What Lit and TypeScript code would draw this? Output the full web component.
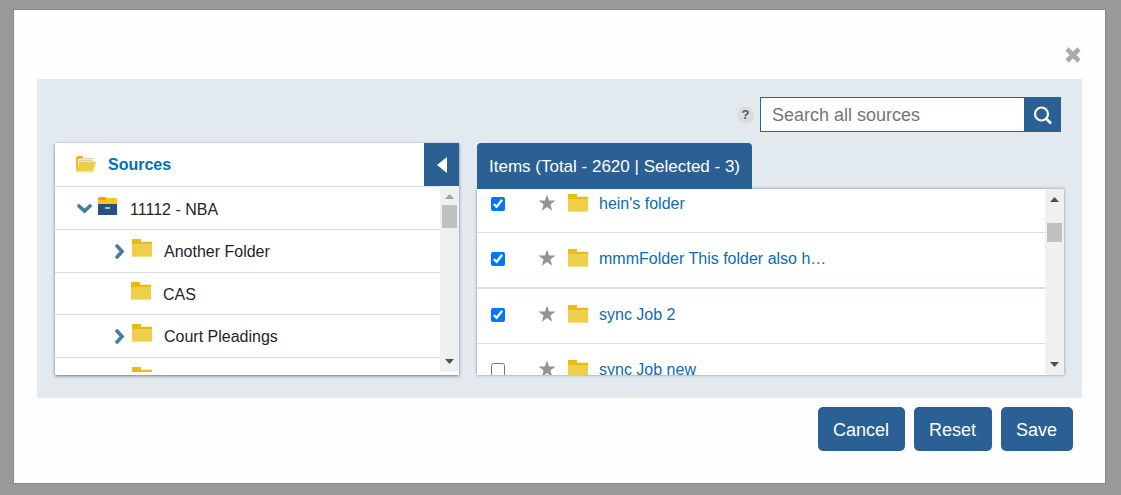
import { LitElement, html, css, svg, nothing } from "lit";
import { customElement, property } from "lit/decorators.js";

interface TreeRow {
  label: string;
  kind?: "root" | "leaf";
  toggle?: "open" | "closed";
}

interface Item {
  id: string;
  label: string;
  checked: boolean;
}

const TREE: TreeRow[] = [
  { label: "11112 - NBA", kind: "root", toggle: "open" },
  { label: "Another Folder", toggle: "closed" },
  { label: "CAS", kind: "leaf" },
  { label: "Court Pleadings", toggle: "closed" },
  { label: "", toggle: "closed" },
];

const ITEMS: Item[] = [
  { id: "hein", label: "hein's folder", checked: true },
  { id: "mmm", label: "mmmFolder This folder also h…", checked: true },
  { id: "sync2", label: "sync Job 2", checked: true },
  { id: "syncnew", label: "sync Job new", checked: false },
];

const folderIcon = html`<svg class="folder" width="20" height="18" viewBox="0 0 20 18" aria-hidden="true">
  <path d="M9 2h11v3H9z" fill="#f7edc4" />
  <path d="M0 0h9v3h11v3H0z" fill="#ebba16" />
  <path d="M0 5h20v12H0z" fill="#efce4a" />
  <path d="M0 17h20v1H0z" fill="#f4e08c" />
</svg>`;

const openFolderIcon = html`<svg width="20" height="17" viewBox="0 0 20 17" aria-hidden="true">
  <path d="M0 1h1V0h6v2h10v6H0z" fill="#e9b91b" />
  <path d="M2 3h15v5H2z" fill="#f3ead0" />
  <path d="M3 4.500h13M4 2.500h13" stroke="#d9cfb2" stroke-width="1" />
  <path d="M0 3h2v11H0z" fill="#e9bd28" />
  <path d="M3.500 6H20l-3 9.500H0z" fill="#efce4a" />
  <path d="M3.500 5.500H20M0 16h17" stroke="#f6e7a8" />
</svg>`;

const cabinetIcon = html`<svg class="folder" width="19" height="18" viewBox="0 0 19 18" aria-hidden="true">
  <path d="M0 1h1V0h6l2 1v3H0z" fill="#f99d0c" />
  <path d="M0 3h7l2-2h10v6H0z" fill="#ffc423" />
  <path d="M0 7h19v11H0z" fill="#23527f" />
  <path d="M7 10h5v2H7z" fill="#a9bccd" />
</svg>`;

const chevronDown = html`<svg width="15" height="10" viewBox="0 0 15 10" aria-hidden="true">
  <path d="M2 2l5.500 5L13 2" fill="none" stroke="#437f9b" stroke-width="3.600" stroke-linecap="round" />
</svg>`;

const chevronRight = html`<svg width="10" height="15" viewBox="0 0 10 15" aria-hidden="true">
  <path d="M2 2l5 5.500L2 13" fill="none" stroke="#437f9b" stroke-width="3.600" stroke-linecap="round" />
</svg>`;

const starIcon = html`<svg width="18" height="18" viewBox="0 0 18 18" aria-hidden="true">
  <path d="M9 .5l2.100 5.900 6.400.1-5.100 3.900 1.800 6.400L9 13.100l-5.200 3.700 1.800-6.400L.5 6.500l6.400-.1z" fill="#949494" />
</svg>`;

@customElement("scroll-rail")
class ScrollRail extends LitElement {
  @property({ type: Boolean, reflect: true }) top = false;

  static styles = css`
    :host {
      display: flex;
      flex-direction: column;
      align-items: center;
      justify-content: space-between;
      box-sizing: border-box;
      flex: none;
      width: 19px;
      padding: 8px 0;
      background: #f0f0f0;
    }
    .upper {
      display: flex;
      flex-direction: column;
      align-items: center;
      gap: 21px;
    }
    .thumb {
      width: 15px;
      height: 19px;
      background: #c1c1c1;
    }
    :host([top]) .upper {
      gap: 6px;
    }
    :host([top]) .thumb {
      height: 23px;
    }
    svg {
      display: block;
    }
  `;

  render() {
    return html`
      <div class="upper">
        <svg width="9" height="5" viewBox="0 0 9 5">
          ${svg`<path d="M4.500 0L9 5H0z" fill=${this.top ? "#a3a3a3" : "#505050"} />`}
        </svg>
        <div class="thumb"></div>
      </div>
      <svg width="9" height="5" viewBox="0 0 9 5"><path d="M0 0h9L4.500 5z" fill="#505050" /></svg>
    `;
  }
}

@customElement("app-root")
class AppRoot extends LitElement {
  static styles = css`
    :host {
      display: block;
      box-sizing: border-box;
      min-height: 100vh;
      padding: 9px 15px 11px 13px;
      background: #999;
      font-family: "Liberation Sans", Arial, sans-serif;
      font-size: 16px;
      line-height: 20px;
      color: #212529;
    }
    * {
      box-sizing: border-box;
    }
    button,
    input {
      font: inherit;
      margin: 0;
    }
    button {
      display: flex;
      align-items: center;
      justify-content: center;
      padding: 0;
      border: 0;
      background: none;
      color: inherit;
      cursor: pointer;
    }
    ul {
      margin: 0;
      padding: 0;
      list-style: none;
    }
    svg {
      display: block;
      flex: none;
    }
    .dialog {
      padding: 0 23px 32px;
      border: 1px solid #888;
      background: #fefefe;
    }
    .top {
      display: flex;
      justify-content: flex-end;
      align-items: flex-end;
      height: 69px;
      padding-bottom: 15px;
    }
    .workspace {
      padding: 18px 18px 23px;
      background: #e2eaf0;
    }
    .search {
      display: flex;
      justify-content: flex-end;
      align-items: center;
      margin: 0 3px 11px 0;
    }
    .help {
      width: 17px;
      height: 18px;
      margin-right: 6px;
      border-radius: 50%;
      background: #dcdcdc;
      color: #555;
      font-size: 13px;
      font-weight: bold;
      line-height: 18px;
    }
    .query {
      width: 264px;
      height: 35px;
      padding: 1px 11px 0;
      border: 1px solid #2a6496;
      border-right: 0;
      border-radius: 0;
      background: #fff;
      font-size: 18px;
      outline: 0;
    }
    .query::placeholder {
      color: #757575;
      opacity: 1;
    }
    .go {
      width: 37px;
      height: 35px;
      background: #2a6093;
    }
    .panels {
      display: grid;
      grid-template-columns: 404fr 587fr;
      gap: 18px;
    }
    .sources {
      min-width: 0;
      padding-bottom: 3px;
      background: #fff;
      box-shadow: 0 1px 3px rgba(0, 0, 0, 0.5);
    }
    .heading {
      display: flex;
      align-items: center;
      height: 43px;
      padding-left: 21px;
    }
    .heading a {
      flex: 1;
      margin-left: 12px;
      color: #0270b8;
      font-weight: bold;
      text-decoration: none;
    }
    .collapse {
      width: 35px;
      height: 43px;
      background: #2a6093;
    }
    .scroller {
      display: flex;
      height: 186px;
      overflow: hidden;
    }
    .tree {
      flex: 1;
      min-width: 0;
      border-top: 1px solid #dadcde;
    }
    .node {
      display: flex;
      align-items: center;
      height: 43px;
      padding: 2px 12px 0 60px;
      border-bottom: 1px solid #dadcde;
    }
    .node.root {
      padding: 3px 12px 0 22px;
    }
    .node.leaf {
      height: 42px;
      padding-left: 59px;
    }
    .twist {
      display: flex;
      width: 17px;
      padding-bottom: 2px;
    }
    .root .twist {
      width: 21px;
    }
    .folder {
      margin-bottom: 8px;
    }
    .name {
      margin-left: 12px;
    }
    .root .name {
      margin-left: 13px;
    }
    .tab {
      display: inline-flex;
      align-items: center;
      height: 46px;
      padding: 1px 12px 0;
      border-radius: 4px 4px 0 0;
      background: #2a6093;
      color: #fff;
      font-size: 17px;
      white-space: nowrap;
    }
    .items {
      min-width: 0;
    }
    .sheet {
      background: #fff;
      box-shadow: 0 0 3px rgba(0, 0, 0, 0.4);
    }
    .list {
      flex: 1;
      min-width: 0;
      margin-top: -11px;
    }
    .item {
      display: flex;
      align-items: center;
      height: 55px;
      padding: 0 14px 2px;
      border-bottom: 1px solid #dadfe4;
    }
    .item:nth-child(2) {
      height: 56px;
      border-bottom-width: 2px;
    }
    .item input {
      width: 14px;
      height: 14px;
      margin-right: 33px;
    }
    .item .folder {
      margin: 0 11px 2px 12px;
    }
    .item label {
      color: #0b6cb0;
      white-space: nowrap;
    }
    .star {
      margin-bottom: 3px;
    }
    .footer {
      display: flex;
      justify-content: flex-end;
      gap: 9px;
      padding: 9px 9px 0;
    }
    .action {
      height: 44px;
      padding: 2px 16px 0 15px;
      border-radius: 5px;
      background: #2a6093;
      color: #fff;
      font-size: 18px;
    }
  `;

  private node(row: TreeRow) {
    return html`<li class="node ${row.kind ?? ""}">
      <span class="twist">
        ${row.toggle
          ? html`<button aria-label="Toggle folder" aria-expanded=${row.toggle === "open"}>
              ${row.toggle === "open" ? chevronDown : chevronRight}
            </button>`
          : nothing}
      </span>
      ${row.kind === "root" ? cabinetIcon : folderIcon}
      <span class="name">${row.label}</span>
    </li>`;
  }

  private item(item: Item) {
    return html`<li class="item">
      <input type="checkbox" id=${item.id} .checked=${item.checked} />
      <button class="star" aria-label="Favorite">${starIcon}</button>
      ${folderIcon}
      <label for=${item.id}>${item.label}</label>
    </li>`;
  }

  render() {
    return html`
      <div class="dialog" role="dialog">
        <div class="top">
          <button aria-label="Close">
            <svg width="18" height="18" viewBox="0 0 18 18">
              <path d="M3 3l12 12M15 3L3 15" stroke="#aaa" stroke-width="4.600" />
            </svg>
          </button>
        </div>
        <div class="workspace">
          <div class="search">
            <button class="help" aria-label="Help">?</button>
            <input class="query" type="text" placeholder="Search all sources" aria-label="Search all sources" />
            <button class="go" aria-label="Search">
              <svg width="20" height="20" viewBox="0 0 20 20">
                <circle cx="8.500" cy="9" r="6.500" fill="none" stroke="#fff" stroke-width="2.200" />
                <path d="M13 13.500l5 5" stroke="#fff" stroke-width="2.600" />
              </svg>
            </button>
          </div>
          <div class="panels">
            <section class="sources">
              <div class="heading">
                ${openFolderIcon}
                <a href="#">Sources</a>
                <button class="collapse" aria-label="Collapse sources">
                  <svg width="10" height="16" viewBox="0 0 10 16">
                    <path d="M10 0v16L0 8z" fill="#fff" />
                  </svg>
                </button>
              </div>
              <div class="scroller">
                <ul class="tree">
                  ${TREE.map((row) => this.node(row))}
                </ul>
                <scroll-rail top></scroll-rail>
              </div>
            </section>
            <section class="items">
              <div class="tab">Items (Total - 2620 | Selected - 3)</div>
              <div class="scroller sheet">
                <ul class="list">
                  ${ITEMS.map((item) => this.item(item))}
                </ul>
                <scroll-rail></scroll-rail>
              </div>
            </section>
          </div>
        </div>
        <div class="footer">
          <button class="action">Cancel</button>
          <button class="action">Reset</button>
          <button class="action">Save</button>
        </div>
      </div>
    `;
  }
}
